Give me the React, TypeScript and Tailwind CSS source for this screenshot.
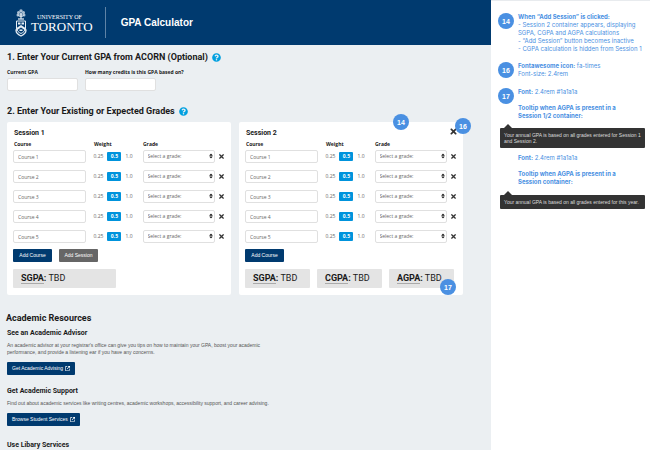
import React from "react";
import { FaQuestionCircle, FaSort, FaTimes } from "react-icons/fa";
import { FaArrowUpRightFromSquare } from "react-icons/fa6";

const courses = ["Course 1", "Course 2", "Course 3", "Course 4", "Course 5"];

const Crest = () => (
  <svg viewBox="0 0 24 56" className="h-[28px] w-[12px]" fill="none" stroke="#e6eef5">
    {/* tree */}
    <g fill="#e6eef5" fillOpacity="0.75" stroke="none">
      <circle cx="12" cy="4" r="3.5" />
      <circle cx="7" cy="7" r="3" />
      <circle cx="17" cy="7" r="3" />
      <circle cx="6" cy="12" r="3" />
      <circle cx="18" cy="12" r="3" />
      <circle cx="12" cy="11" r="3" />
    </g>
    <path d="M12 8v12M12 16l-5-3M12 16l5-3" strokeWidth="2" />
    <path d="M6 20h12" strokeWidth="2.5" />
    {/* shield */}
    <path d="M3 24h18v14c0 6-5 9-9 11-4-2-9-5-9-11z" strokeWidth="2" />
    <path d="M6 27h5v4H6zM13 27h5v4h-5z" fill="#e6eef5" stroke="none" />
    <path d="M3 38l9-6 9 6v5l-9-6-9 6z" fill="#e6eef5" stroke="none" />
    <path d="M9 41h6v3H9z" fill="#e6eef5" stroke="none" />
    {/* ribbon */}
    <path d="M2 43c0 5 4 8 10 11 6-3 10-6 10-11" strokeWidth="2.5" />
    <path d="M1 42h4M19 42h4" strokeWidth="3" />
  </svg>
);

const Header = () => (
  <header className="flex h-[45px] items-center bg-[#003a6f] pl-[15px] text-white">
    <a href="#" className="flex items-center">
      <Crest />
      <div className="ml-1 pt-px font-['Liberation_Serif',serif]">
        <p className="pl-[6px] text-[6px] leading-[7px]">UNIVERSITY OF</p>
        <p className="text-[13px] leading-[11px]">TORONTO</p>
      </div>
    </a>
    <div className="ml-3 h-[31px] w-px bg-[#5f83a6]" />
    <h1 className="ml-[15px] text-[10px] font-bold">GPA Calculator</h1>
  </header>
);

const SectionTitle = ({ children }: { children: React.ReactNode }) => (
  <h2 className="flex items-center gap-1 font-[Roboto,sans-serif] text-[9px] leading-[12px] font-bold">
    {children}
    <button aria-label="Help" className="text-[#00a0e0]">
      <FaQuestionCircle size={9} />
    </button>
  </h2>
);

const Badge = ({ children, className = "" }: { children: React.ReactNode; className?: string }) => (
  <span
    className={`flex size-4 items-center justify-center rounded-full bg-[#4a90e2] text-[7px] leading-none font-bold text-white ${className}`}
  >
    {children}
  </span>
);

const CourseRow = ({ course, session }: { course: string; session: number }) => (
  <div className="flex items-center font-['Open_Sans',sans-serif] text-[5px] text-[#666]">
    <div className="min-w-0 flex-1">
      <input
        aria-label={`Session ${session} ${course}`}
        defaultValue={course}
        className="block h-[13px] w-full rounded-[2px] border border-[#e0e0e0] bg-white px-1"
      />
    </div>
    <div className="mx-2 flex w-[41px] items-center justify-between pr-[2px]">
      <button>0.25</button>
      <button className="h-[9px] w-[14px] rounded-[1px] bg-[#0093dc] font-bold text-white">0.5</button>
      <button>1.0</button>
    </div>
    <div className="relative min-w-0 flex-1">
      <select
        aria-label={`Session ${session} ${course} grade`}
        className="block h-[13px] w-full appearance-none rounded-[2px] border border-[#e0e0e0] bg-white px-1"
      >
        <option>Select a grade:</option>
      </select>
      <FaSort size={6} className="pointer-events-none absolute top-[3px] right-px text-[#1a1a1a]" />
    </div>
    <button aria-label="Remove course" className="ml-[2px] flex w-2 justify-center text-[#333]">
      <FaTimes size={7} />
    </button>
  </div>
);

const Gpa = ({ name }: { name: string }) => (
  <div className="relative h-[19px] rounded-[1px] bg-[#e4e4e4] pl-2 font-[Roboto,sans-serif] text-[9px] leading-[19px]">
    <b className="border-b border-[#aaa]">{name}</b>
    <b>:</b> TBD
    {name === "AGPA" && (
      <Badge className="absolute -right-[2px] -bottom-[7px] font-['Liberation_Sans',sans-serif]">17</Badge>
    )}
  </div>
);

const Session = ({ session }: { session: number }) => (
  <section className="relative rounded-[2px] bg-white px-[6px] pt-[5px] pb-[7px]">
    <h3 className="pl-px font-[Roboto,sans-serif] text-[7px] leading-[12px] font-bold">Session {session}</h3>
    <div className="flex pl-px font-['Open_Sans',sans-serif] text-[5px] leading-[11px] font-bold">
      <span className="flex-1">Course</span>
      <span className="mx-2 w-[41px]">Weight</span>
      <span className="flex-1">Grade</span>
      <span className="ml-[2px] w-2" />
    </div>
    <div className="flex flex-col gap-[7px]">
      {courses.map((course) => (
        <CourseRow key={course} course={course} session={session} />
      ))}
    </div>
    <div className="mt-[6px] mb-[7px] flex gap-[7px] text-[5px] text-white">
      <button className="h-[13px] w-[39px] rounded-[1px] bg-[#003a6f]">Add Course</button>
      {session === 1 && <button className="h-[13px] w-[39px] rounded-[1px] bg-[#666]">Add Session</button>}
    </div>
    {session === 1 ? (
      <div className="grid grid-cols-2 gap-[7px]">
        <Gpa name="SGPA" />
      </div>
    ) : (
      <div className="grid grid-cols-3 gap-[7px] pr-[3px]">
        <Gpa name="SGPA" />
        <Gpa name="CGPA" />
        <Gpa name="AGPA" />
      </div>
    )}
    {session === 2 && (
      <>
        <button aria-label="Remove session" className="absolute top-[5px] right-[5px] text-[#333]">
          <FaTimes size={9} />
        </button>
        <Badge className="absolute -top-2 right-[54px]">14</Badge>
        <Badge className="absolute -top-1 -right-2">16</Badge>
      </>
    )}
  </section>
);

const ResourceTitle = ({ children }: { children: React.ReactNode }) => (
  <h3 className="mb-1 font-[Roboto,sans-serif] text-[7px] leading-[9px] font-bold text-[#1a1a1a]">{children}</h3>
);

const ResourceLink = ({ children }: { children: React.ReactNode }) => (
  <a
    href="#"
    className="mt-[6px] flex h-[13px] w-fit items-center gap-[2px] rounded-[1px] bg-[#003a6f] px-[5px] text-[5px] text-white"
  >
    {children}
    <FaArrowUpRightFromSquare size={5} />
  </a>
);

const Resources = () => (
  <section className="mt-[17px] text-[5px] leading-[7px] text-[#555]">
    <h2 className="-ml-px mb-[5px] font-[Roboto,sans-serif] text-[9px] leading-[12px] font-bold text-[#1a1a1a]">
      Academic Resources
    </h2>
    <ResourceTitle>See an Academic Advisor</ResourceTitle>
    <p className="max-w-[270px]">
      An academic advisor at your registrar's office can give you tips on how to maintain your GPA, boost your academic
      performance, and provide a listening ear if you have any concerns.
    </p>
    <ResourceLink>Get Academic Advising</ResourceLink>
    <div className="mt-3 mb-[15px]">
      <ResourceTitle>Get Academic Support</ResourceTitle>
      <p>
        Find out about academic services like writing centres, academic workshops, accessibility support, and career
        advising.
      </p>
      <ResourceLink>Browse Student Services</ResourceLink>
    </div>
    <ResourceTitle>Use Libary Services</ResourceTitle>
  </section>
);

const Note = ({ badge, children }: { badge?: number; children: React.ReactNode }) => (
  <div className="flex gap-1">
    <div className="w-4">
      {badge && <Badge className="font-['Liberation_Sans',sans-serif]">{badge}</Badge>}
    </div>
    <div className="min-w-0 flex-1">{children}</div>
  </div>
);

const Tooltip = ({ children }: { children: React.ReactNode }) => (
  <div className="mt-1 pr-[5px] pl-[2px] font-['Liberation_Sans',sans-serif]">
    <div className="ml-1 size-0 border-x-4 border-b-4 border-x-transparent border-b-[#333]" />
    <p className="rounded-[1px] bg-[#333] px-1 py-1 text-[5px] leading-[6px] text-[#ddd]">{children}</p>
  </div>
);

const Notes = () => (
  <aside className="w-[159px] border-t border-[#e8ebee] bg-white pt-3 pl-[7px] font-[Inter,sans-serif] text-[6px] leading-[8px] text-[#4a90e2]">
    <Note badge={14}>
      <b>When “Add Session” is clicked:</b>
      <p>
        - Session 2 container appears, displaying
        <br />
        SGPA, CGPA and AGPA calculations
      </p>
      <p>- “Add Session” button becomes inactive</p>
      <p>- CGPA calculation is hidden from Session 1</p>
    </Note>
    <div className="mt-[9px]">
      <Note badge={16}>
        <p>
          <b>Fontawesome icon:</b> fa-times
        </p>
        <p>Font-size: 2.4rem</p>
      </Note>
    </div>
    <div className="mt-[10px]">
      <Note badge={17}>
        <p>
          <b>Font:</b> 2.4rem #1a1a1a
        </p>
        <p className="mt-2 font-bold">
          Tooltip when AGPA is present in a
          <br />
          Session 1/2 container:
        </p>
      </Note>
    </div>
    <Tooltip>Your annual GPA is based on all grades entered for Session 1 and Session 2.</Tooltip>
    <div className="mt-[6px] mb-[5px]">
      <Note>
        <p>
          <b>Font:</b> 2.4rem #1a1a1a
        </p>
        <p className="mt-2 font-bold">
          Tooltip when AGPA is present in a
          <br />
          Session container:
        </p>
      </Note>
    </div>
    <Tooltip>Your annual GPA is based on all grades entered for this year.</Tooltip>
  </aside>
);

const App = () => {
  return (
    <div className="flex h-screen overflow-hidden font-['Liberation_Sans',sans-serif] text-[#1a1a1a]">
      <div className="min-w-0 flex-1 bg-[#ebeff2]">
        <Header />
        <main className="pt-[6px] pr-7 pl-[7px]">
          <SectionTitle>1. Enter Your Current GPA from ACORN (Optional)</SectionTitle>
          <div className="mt-1 mb-[14px] flex gap-[7px] font-['Open_Sans',sans-serif] text-[5px] leading-[11px] font-bold">
            <label className="w-[71px]">
              Current GPA
              <input className="block h-[13px] w-full rounded-[2px] border border-[#e0e0e0] bg-white px-1" />
            </label>
            <label className="w-[71px] whitespace-nowrap">
              How many credits is this GPA based on?
              <input className="block h-[13px] w-full rounded-[2px] border border-[#e0e0e0] bg-white px-1" />
            </label>
          </div>
          <SectionTitle>2. Enter Your Existing or Expected Grades</SectionTitle>
          <div className="mt-[5px] grid grid-cols-2 gap-2">
            <Session session={1} />
            <Session session={2} />
          </div>
          <Resources />
        </main>
      </div>
      <Notes />
    </div>
  );
};

export default App;
